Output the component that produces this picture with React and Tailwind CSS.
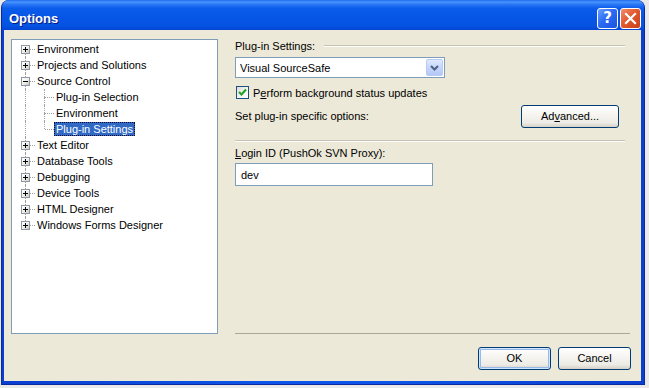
import React from "react";

const rows = [
  { label: "Environment", level: 0, exp: "+" },
  { label: "Projects and Solutions", level: 0, exp: "+" },
  { label: "Source Control", level: 0, exp: "-" },
  { label: "Plug-in Selection", level: 1 },
  { label: "Environment", level: 1 },
  { label: "Plug-in Settings", level: 1, selected: true, lastChild: true },
  { label: "Text Editor", level: 0, exp: "+" },
  { label: "Database Tools", level: 0, exp: "+" },
  { label: "Debugging", level: 0, exp: "+" },
  { label: "Device Tools", level: 0, exp: "+" },
  { label: "HTML Designer", level: 0, exp: "+" },
  { label: "Windows Forms Designer", level: 0, exp: "+", lastRoot: true },
];

function Expander({ sign }) {
  return (
    <div className="absolute left-[5px] top-[4px] w-[9px] h-[9px] border border-[#8C9BAA] bg-[linear-gradient(135deg,#FFFFFF_0%,#F2F1EC_50%,#C9C7BA_100%)] z-10">
      <div className="absolute left-[1px] top-[3px] w-[5px] h-[1px] bg-black" />
      {sign === "+" && <div className="absolute left-[3px] top-[1px] w-[1px] h-[5px] bg-black" />}
    </div>
  );
}

function TreeRow({ row, index }) {
  const first = index === 0;
  return (
    <div className="h-[16px] flex items-center">
      {/* level 0 cell */}
      <div className="relative w-[19px] h-[16px] shrink-0">
        {row.level === 0 ? (
          <>
            {!first && <div className="absolute left-[9px] top-0 h-[8px] border-l border-dotted border-[#A0A0A0]" />}
            {!row.lastRoot && <div className="absolute left-[9px] top-[8px] h-[8px] border-l border-dotted border-[#A0A0A0]" />}
            <div className="absolute left-[10px] right-0 top-[8px] border-t border-dotted border-[#A0A0A0]" />
            <Expander sign={row.exp} />
          </>
        ) : (
          <div className="absolute left-[9px] top-0 h-[16px] border-l border-dotted border-[#A0A0A0]" />
        )}
      </div>
      {row.level === 1 && (
        <div className="relative w-[19px] h-[16px] shrink-0">
          <div className="absolute left-[9px] top-0 h-[8px] border-l border-dotted border-[#A0A0A0]" />
          {!row.lastChild && <div className="absolute left-[9px] top-[8px] h-[8px] border-l border-dotted border-[#A0A0A0]" />}
          <div className="absolute left-[10px] right-0 top-[8px] border-t border-dotted border-[#A0A0A0]" />
        </div>
      )}
      <span
        className={
          row.selected
            ? "h-[14px] leading-[12px] px-[1px] bg-[#316AC5] text-white border border-dotted border-[#0A0A30] whitespace-nowrap"
            : "h-[14px] leading-[14px] px-[2px] whitespace-nowrap"
        }
      >
        {row.label}
      </span>
    </div>
  );
}

function XPButton({ children, def, className = "" }) {
  return (
    <div
      className={
        "h-[23px] rounded-[3px] border border-[#003C74] flex items-center justify-center bg-[linear-gradient(to_bottom,#FFFFFF_0%,#F6F5F1_40%,#ECEBE5_80%,#D6D0C5_100%)] " +
        (def ? "shadow-[inset_0_0_0_1px_#CEE7FF,inset_0_0_0_2px_#98B8EA] " : "") +
        className
      }
    >
      <span className="leading-[13px]">{children}</span>
    </div>
  );
}

export default function App() {
  return (
    <div className="w-[649px] h-[388px] bg-[#E9E9E9] font-['Liberation_Sans',Arial,sans-serif] text-[11px] text-black overflow-hidden">
      <div className="ml-[1px] w-[644px] h-[385px] flex flex-col rounded-t-[8px] overflow-hidden bg-[#0A4CE2] border-x border-b border-[#0A2A9E]">
        {/* Title bar */}
        <div className="h-[30px] shrink-0 flex items-start pl-[7px] pr-[3px] bg-[linear-gradient(to_bottom,#1E6CF2_0%,#4A95FB_7%,#2A78F6_14%,#0C5CEB_28%,#0656E6_60%,#0553E2_85%,#0446D4_100%)]">
          <div className="mt-[11px] leading-[16px] text-[13px] font-bold text-white [text-shadow:1px_1px_0_#0A1A80]">
            Options
          </div>
          <div className="ml-auto mt-[8px] flex gap-[2px]">
            <div className="w-[21px] h-[21px] rounded-[3px] border border-white bg-[linear-gradient(135deg,#6A9EFF_0%,#2C6BF5_45%,#1A55E0_100%)] flex items-center justify-center">
              <span className="text-white font-bold text-[15px] leading-[15px] font-['DejaVu_Sans',sans-serif]">?</span>
            </div>
            <div className="w-[21px] h-[21px] rounded-[3px] border border-white bg-[linear-gradient(135deg,#F08E6E_0%,#E3592F_45%,#C8401B_100%)] flex items-center justify-center">
              <svg width="19" height="19" viewBox="0 0 19 19">
                <path d="M5 5 L14 14 M14 5 L5 14" stroke="white" strokeWidth="2.2" strokeLinecap="square" />
              </svg>
            </div>
          </div>
        </div>

        {/* Frame + client */}
        <div className="flex-1 pl-[2px] pr-[3px] pb-[3px] bg-[linear-gradient(to_right,#0A3FD0,#0D55E8_40%,#0D55E8_60%,#0A3FD0)]">
          <div className="w-[637px] h-[351px] bg-[#ECE9D8] flex flex-col pl-[7px] pt-[9px] pr-[10px] pb-[11px]">
            <div className="flex h-[295px] gap-[17px]">
              {/* Tree */}
              <div className="w-[207px] h-[295px] bg-white border border-[#7F9DB9] pt-[1px] pl-[4px] shrink-0">
                {rows.map((r, i) => (
                  <TreeRow key={i} row={r} index={i} />
                ))}
              </div>

              {/* Right panel */}
              <div className="w-[396px] flex flex-col">
                <div className="h-[14px] flex items-center">
                  <span className="leading-[14px] whitespace-nowrap">Plu<span className="underline">g</span>-in Settings:</span>
                  <div className="flex-1 ml-[9px] mr-[6px] border-t border-[#C5C2B2] border-b border-b-white h-[2px]" />
                </div>

                <div className="mt-[4px] w-[210px] h-[21px] border border-[#7F9DB9] bg-white flex items-center pl-[4px] pr-[1px]">
                  <span className="leading-[14px]">Visual SourceSafe</span>
                  <div className="ml-auto w-[17px] h-[17px] rounded-[2px] border border-[#B8CBF4] bg-[linear-gradient(to_bottom,#E0EAFE_0%,#C5D6FC_50%,#B4C8F6_100%)] flex items-center justify-center">
                    <svg width="9" height="6" viewBox="0 0 9 6">
                      <path d="M1 1 L4.5 4.5 L8 1" fill="none" stroke="#4D6185" strokeWidth="2" />
                    </svg>
                  </div>
                </div>

                <div className="mt-[8px] h-[13px] flex items-center gap-[4px] pl-[1px]">
                  <div className="w-[13px] h-[13px] border border-[#1C5180] bg-[linear-gradient(135deg,#DCDCD7_0%,#F2F2EE_50%,#FFFFFF_100%)] flex items-center justify-center shrink-0">
                    <svg width="9" height="9" viewBox="0 0 9 9">
                      <path d="M1 4 L3.5 6.5 L8 1.5" fill="none" stroke="#21A121" strokeWidth="2" />
                    </svg>
                  </div>
                  <span className="leading-[14px] whitespace-nowrap">P<span className="underline">e</span>rform background status updates</span>
                </div>

                <div className="mt-[6px] h-[22px] flex items-center justify-between pr-[12px]">
                  <span className="leading-[14px]">Set plug-in specific options:</span>
                  <XPButton className="w-[98px] h-[22px]">
                    Ad<span className="underline">v</span>anced...
                  </XPButton>
                </div>

                <div className="mt-[13px] mr-[6px] h-[2px] border-t border-[#C5C2B2] border-b border-b-white" />

                <div className="mt-[4px] h-[14px] leading-[14px]">
                  <span className="underline">L</span>ogin ID (PushOk SVN Proxy):
                </div>

                <div className="mt-[3px] w-[198px] h-[23px] border border-[#7F9DB9] bg-white flex items-center pl-[5px]">
                  <span className="leading-[14px]">dev</span>
                </div>

                <div className="mt-auto mr-[1px] h-[1px] bg-[#ACA899]" />
              </div>
            </div>

            <div className="mt-[13px] flex justify-end gap-[7px]">
              <XPButton def className="w-[73px]">OK</XPButton>
              <XPButton className="w-[73px]">Cancel</XPButton>
            </div>
          </div>
        </div>
      </div>
    </div>
  );
}
